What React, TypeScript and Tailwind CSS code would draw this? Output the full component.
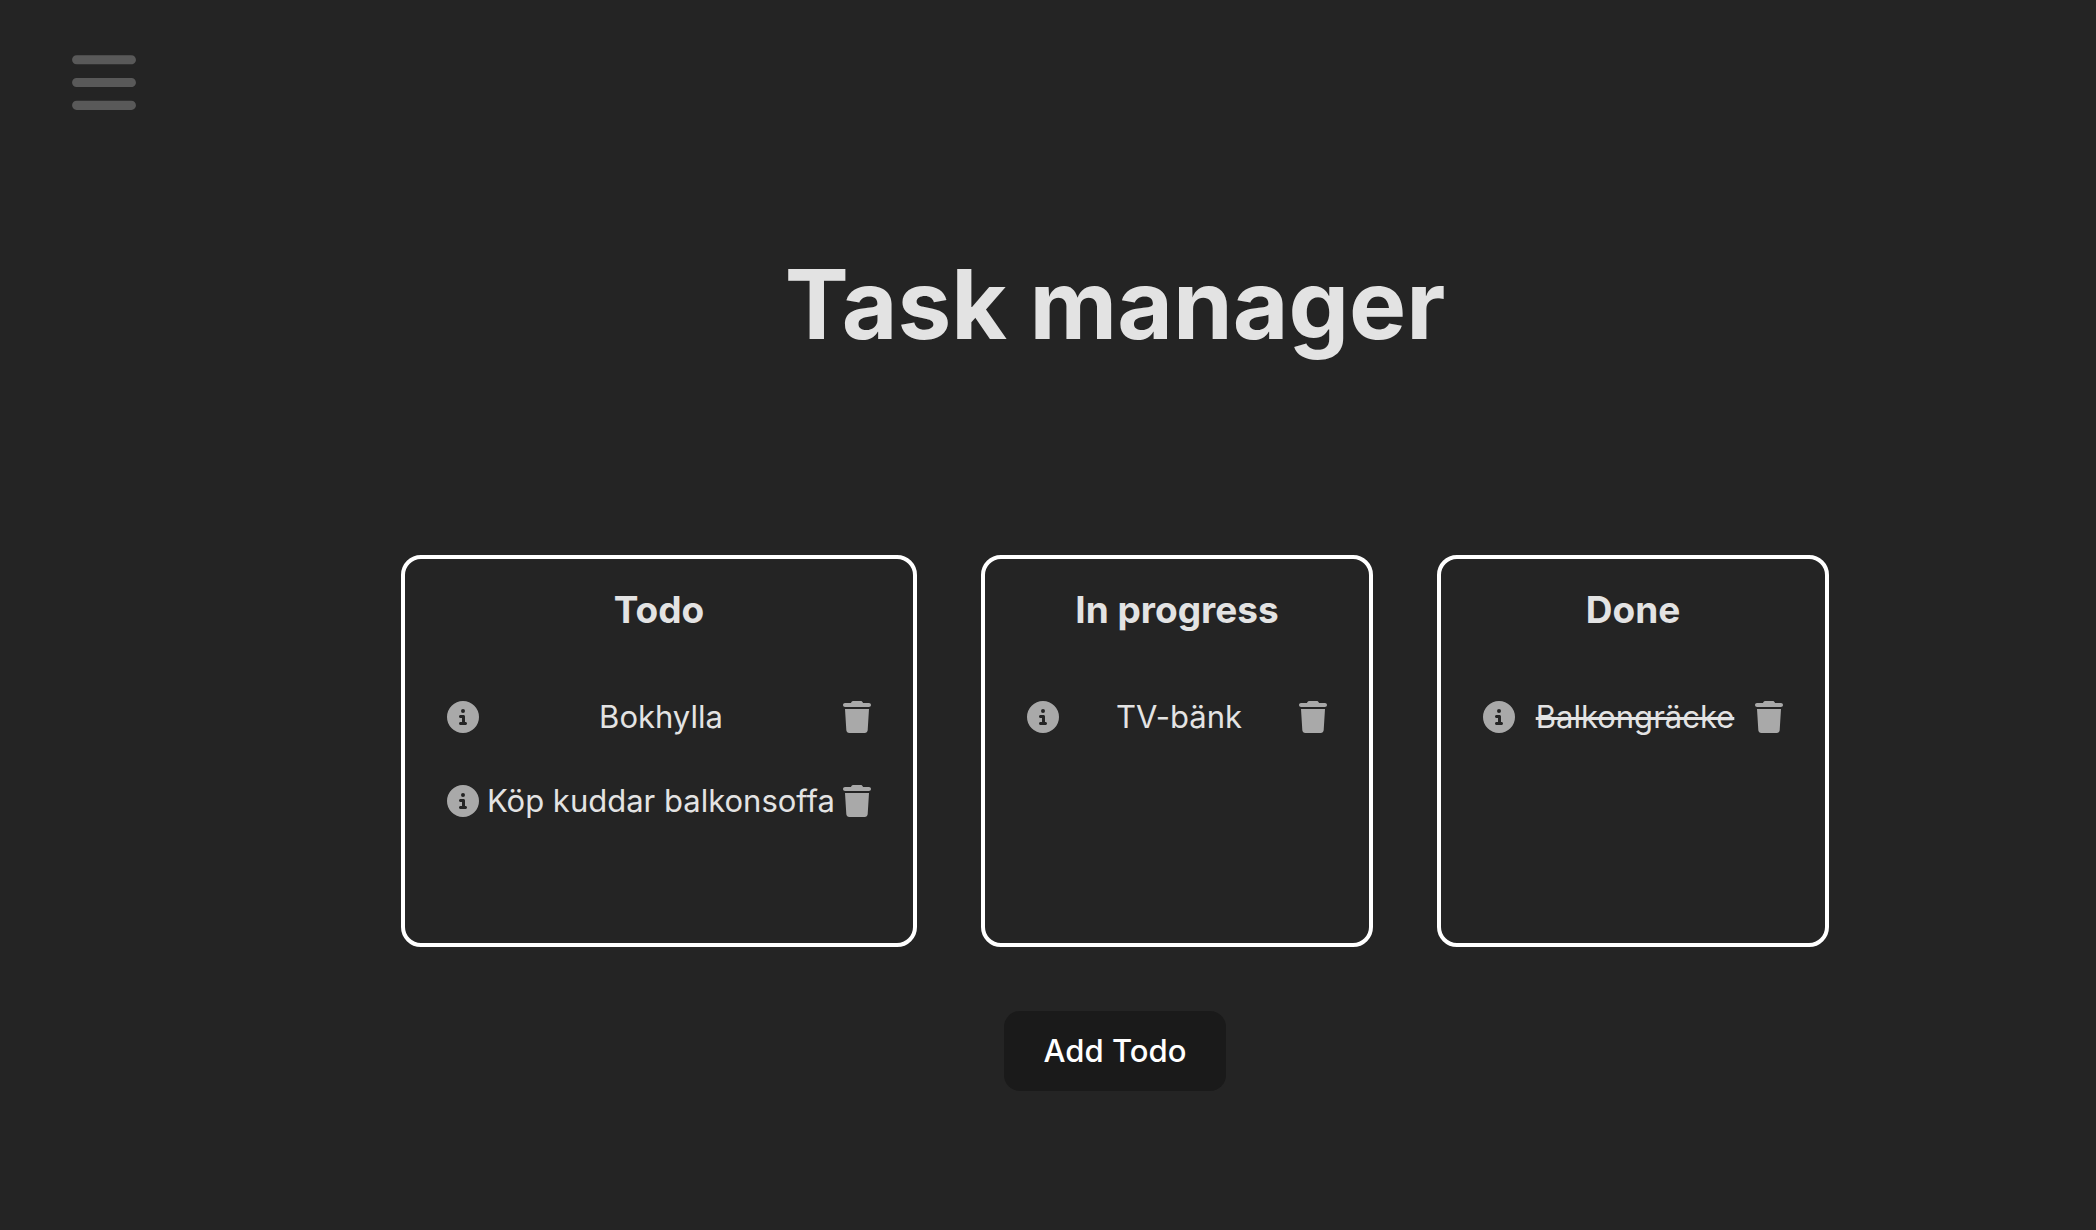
import { FaBars, FaCircleInfo, FaTrash } from "react-icons/fa6";

type Task = { title: string; done?: boolean };
type Column = { heading: string; tasks: Task[] };

const columns: Column[] = [
  { heading: "Todo", tasks: [{ title: "Bokhylla" }, { title: "Köp kuddar balkonsoffa" }] },
  { heading: "In progress", tasks: [{ title: "TV-bänk" }] },
  { heading: "Done", tasks: [{ title: "Balkongräcke", done: true }] },
];

function TaskRow({ task }: { task: Task }) {
  return (
    <li className="flex items-center justify-between gap-2">
      <button type="button" aria-label={`Show ${task.title}`} className="shrink-0 text-[#a9a9a9]">
        <FaCircleInfo className="h-8 w-8" />
      </button>
      <span className={task.done ? "line-through decoration-[3px]" : ""}>{task.title}</span>
      <button type="button" aria-label={`Delete ${task.title}`} className="shrink-0 text-[#a9a9a9]">
        <FaTrash className="h-8 w-7" />
      </button>
    </li>
  );
}

function BoardColumn({ column }: { column: Column }) {
  return (
    <section className="min-h-[392px] min-w-[392px] rounded-[20px] border-4 border-white px-[42px] pt-[27px]">
      <h2 className="text-center text-[37px] leading-12 font-bold">{column.heading}</h2>
      <ul className="mt-[59px] flex flex-col gap-9 text-[31px] leading-12">
        {column.tasks.map((task) => (
          <TaskRow key={task.title} task={task} />
        ))}
      </ul>
    </section>
  );
}

export default function App() {
  return (
    <div className="flex min-h-screen bg-[#242424] font-['Inter','Liberation_Sans',sans-serif] text-[#e3e3e3]">
      <aside className="w-[208px] shrink-0 pt-[46px] pl-[72px]">
        <button type="button" aria-label="Open menu" className="block text-[#595959]">
          <FaBars className="h-[73px] w-16" />
        </button>
      </aside>
      <main className="flex flex-1 flex-col items-center pr-[74px]">
        <h1 className="mt-[248px] text-[96px] leading-[112px] font-bold">Task manager</h1>
        <div className="mt-[195px] flex gap-16">
          {columns.map((column) => (
            <BoardColumn key={column.heading} column={column} />
          ))}
        </div>
        <button
          type="button"
          className="mt-16 rounded-2xl bg-[#1a1a1a] px-10 py-4 text-[31px] leading-12 font-medium text-white"
        >
          Add Todo
        </button>
      </main>
    </div>
  );
}
